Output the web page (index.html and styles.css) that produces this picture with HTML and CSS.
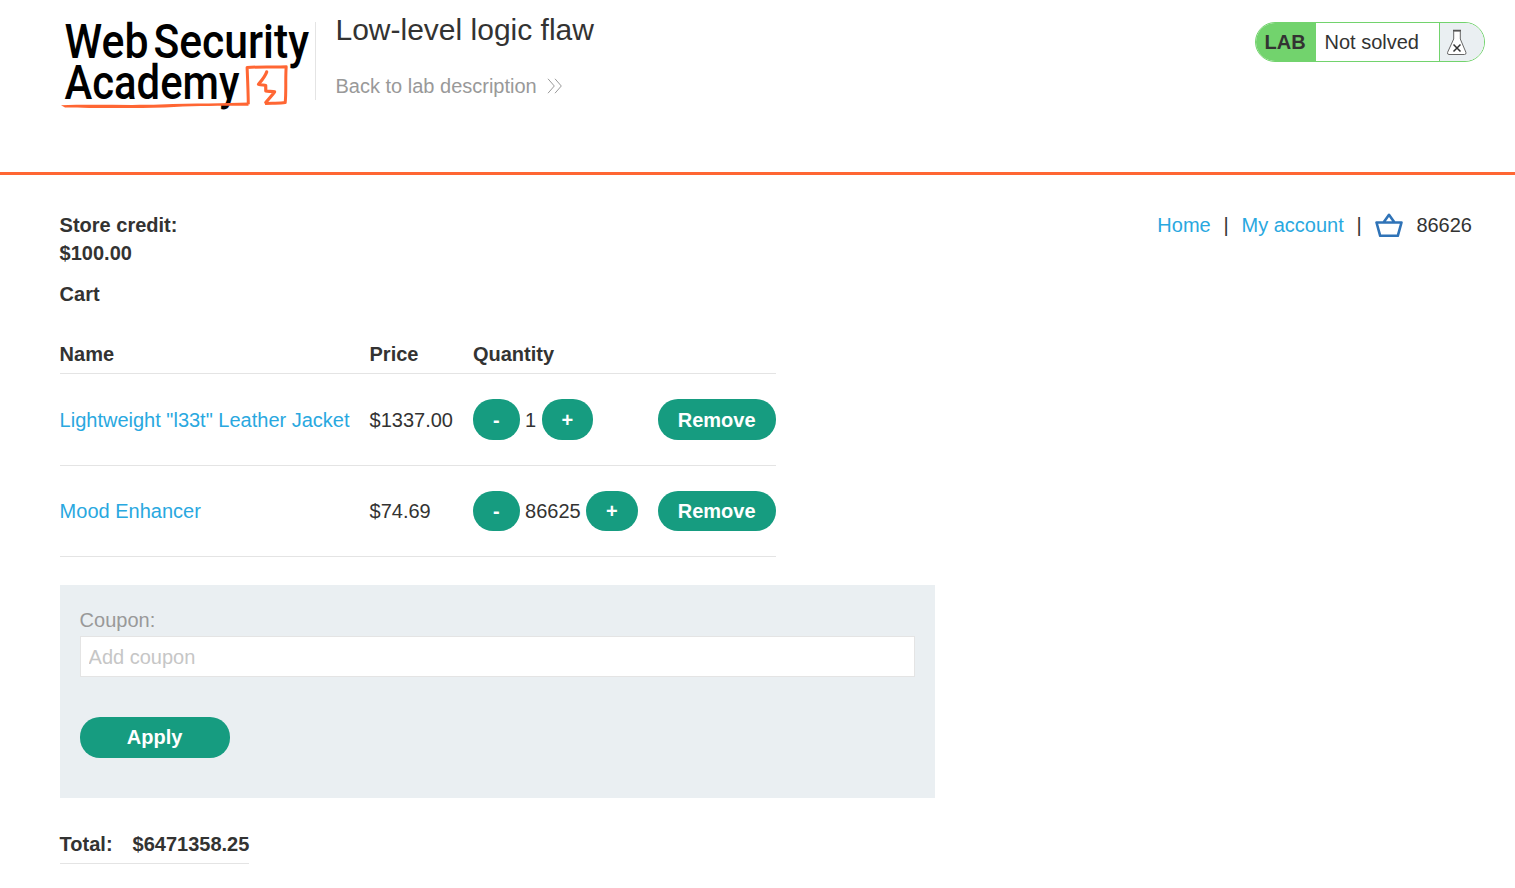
FILE: index.html
```html
<!DOCTYPE html>
<html lang="en">
<head>
<meta charset="utf-8">
<title>Low-level logic flaw</title>
<link rel="stylesheet" href="styles.css">
</head>
<body>
<header class="lab-header">
  <svg class="logo" width="255" height="114" viewBox="60 0 255 114" role="img" aria-label="Web Security Academy">
    <g class="logo-text">
      <text x="64.5" y="58.3" textLength="84" lengthAdjust="spacingAndGlyphs">Web</text>
      <text x="153.5" y="58.3" textLength="155.5" lengthAdjust="spacingAndGlyphs">Security</text>
      <text x="64.5" y="98.8" textLength="175" lengthAdjust="spacingAndGlyphs">Academy</text>
    </g>
    <path class="logo-underline" d="M61 105.200C90 104.200 130 105.400 160 104.600C195 103.400 225 103.600 248.500 102.600V105.800C225 105.600 195 105.800 165 107.400C130 108.500 90 108 65 107.400Z"/>
    <path class="logo-box" d="M248.300 104.200C248.200 92 247.600 79 247.100 67.500C259 66.500 273 67.300 286.200 66.800C285.200 79 286.400 91 285.200 102.600C279 103.700 272 102.800 265 103.400"/>
    <path class="logo-bolt" d="M266.700 71.800C265.800 75.500 262 80 258.500 84.300C261.500 85.500 264.500 84.500 265.700 85.500L265.800 91C268.500 91.700 272 90.800 274.600 91.800C272.500 95 269 98.500 265.800 102.600"/>
  </svg>
  <div class="title-block">
    <h2 class="title">Low-level logic flaw</h2>
    <a class="back-link">Back to lab description
      <svg class="chevrons" width="16" height="16" viewBox="0 0 16 16"><path d="M1 .8 7.300 8 1 15.200M8 .8 14.300 8 8 15.200"/></svg>
    </a>
  </div>
  <div class="status">
    <span class="status-lab">LAB</span>
    <span class="status-text">Not solved</span>
    <span class="status-icon">
      <svg width="22" height="27" viewBox="0 0 22 27"><path class="flask" d="M7.700 2V10L1.600 23.300Q1 25.500 3 25.500H18.500Q20.500 25.500 19.900 23.300L14.300 10V2Z"/><path class="flask-lip" d="M7 1.500H15"/><path class="flask-x" d="M7.500 15.500 14.500 22.500M14.500 15.500 7.500 22.500"/></svg>
    </span>
  </div>
</header>
<main class="page">
  <div class="topbar">
    <p class="credit">Store credit:<br>$100.00</p>
    <nav class="nav">
      <a>Home</a><span>|</span><a>My account</a><span>|</span>
      <svg class="basket" width="28" height="26" viewBox="0 0 28 26"><path d="M1.500 10.500H26.500L22.800 23.800H5.200ZM8.500 10.500 14 2.800 19.500 10.500"/></svg>
      <span class="count">86626</span>
    </nav>
  </div>
  <h1 class="cart-title">Cart</h1>
  <table class="cart">
    <tr><th>Name</th><th>Price</th><th>Quantity</th><th></th></tr>
    <tr class="first-item">
      <td><a>Lightweight "l33t" Leather Jacket</a></td><td>$1337.00</td>
      <td><div class="quantity"><button class="button">-</button>1<button class="button">+</button></div></td>
      <td><button class="button">Remove</button></td>
    </tr>
    <tr>
      <td><a>Mood Enhancer</a></td><td>$74.69</td>
      <td><div class="quantity"><button class="button">-</button>86625<button class="button">+</button></div></td>
      <td><button class="button">Remove</button></td>
    </tr>
  </table>
  <form class="coupon">
    <label for="coupon">Coupon:</label>
    <input id="coupon" type="text" placeholder="Add coupon">
    <button class="button apply" type="button">Apply</button>
  </form>
  <div class="total"><span>Total:</span><span>$6471358.25</span></div>
</main>
</body>
</html>
```
FILE: styles.css
```css
* { box-sizing: border-box; }
body {
  margin: 0;
  background: #fff;
  color: #333332;
  font: 20px/28px "Liberation Sans", Arial, sans-serif;
  overflow: hidden;
}
a { color: #29a8df; text-decoration: none; }

.lab-header {
  display: flex;
  align-items: flex-start;
  height: 175px;
  padding: 0 30px 0 60px;
  border-bottom: 3px solid #ff6633;
}
.logo { flex: none; overflow: visible; }
.logo-text { font: 500 48px Roboto, sans-serif; fill: #000; }
.logo-underline { fill: #ff6633; }
.logo-box { fill: none; stroke: #ff6633; stroke-width: 3; stroke-linejoin: round; }
.logo-bolt { fill: none; stroke: #ff6633; stroke-width: 3.2; stroke-linejoin: round; stroke-linecap: round; }
.title-block {
  height: 78px;
  margin-top: 22px;
  padding-left: 19.5px;
  border-left: 1px solid #e4e4e4;
}
.title { margin: -10px 0 0; font-size: 30px; font-weight: 400; line-height: 36px; }
.back-link { display: flex; align-items: center; gap: 10px; margin-top: 24px; color: #999; }
.chevrons { fill: none; stroke: #999; stroke-width: 1; }
.status {
  display: flex;
  width: 230px;
  height: 40px;
  margin: 22px 0 0 auto;
  border: 1px solid #72d36d;
  border-radius: 20px;
  overflow: hidden;
  line-height: 39px;
}
.status-lab { width: 60px; padding-left: 8.5px; background: #72d36d; font-weight: 700; }
.status-text { flex: 1; padding-left: 8.5px; }
.status-icon { display: flex; width: 45px; padding: 6px 0 0 6px; border-left: 1px solid #72d36d; background: #eaeff2; }
.flask { fill: #fff; stroke: #666; stroke-width: 1; }
.flask-lip { stroke: #555; stroke-width: 1.6; }
.flask-x { stroke: #333; stroke-width: 1.5; }

.page { padding: 36px 43px 0 59.6px; }
.topbar { display: flex; justify-content: space-between; align-items: flex-start; }
.credit { margin: 0; font-weight: 700; }
.nav { display: flex; align-items: center; white-space: pre; }
.nav span { margin: 0 12.8px; }
.nav span:nth-of-type(2) { margin-right: 13.6px; }
.nav .count { margin: 0 0 0 13px; }
.basket { fill: none; stroke: #2f73b7; stroke-width: 2.6; stroke-linejoin: round; }
.cart-title { margin: 13px 0 0; font-size: 20px; line-height: 28px; }

.cart { margin-top: 27px; border-collapse: separate; border-spacing: 0; }
.cart th { padding: 5px 20px 5px 0; text-align: left; border-bottom: 1px solid #e4e4e4; }
.cart td { height: 91px; padding: 0 20px 0 0; vertical-align: middle; border-bottom: 1px solid #e4e4e4; }
.cart .first-item td { height: 92px; }
.cart th:last-child, .cart td:last-child { padding-right: 0; }
.quantity { display: flex; align-items: center; gap: 5.4px; }
.button {
  display: block;
  height: 40px;
  padding: 0 20px;
  border: 0;
  border-radius: 20px;
  background: #169c80;
  color: #fff;
  font: 700 20px/40px "Liberation Sans", Arial, sans-serif;
}
.first-item .button, .apply { height: 41px; }

.coupon { width: 875px; height: 213px; margin-top: 28px; padding: 21px 20px; background: #eaeff2; }
.coupon label { display: block; color: #999; }
.coupon input {
  display: block;
  width: 100%;
  height: 41px;
  margin-top: 2px;
  padding: 1px 8px 0;
  border: 1px solid #e4e4e4;
  font: 20px "Liberation Sans", Arial, sans-serif;
}
.coupon input::placeholder { color: #c6c6c6; opacity: 1; }
.apply { width: 150px; margin-top: 40px; padding-bottom: 1px; }
.total {
  display: inline-flex;
  gap: 20px;
  margin-top: 32px;
  padding-bottom: 5px;
  border-bottom: 1px solid #e4e4e4;
  font-weight: 700;
}
```
